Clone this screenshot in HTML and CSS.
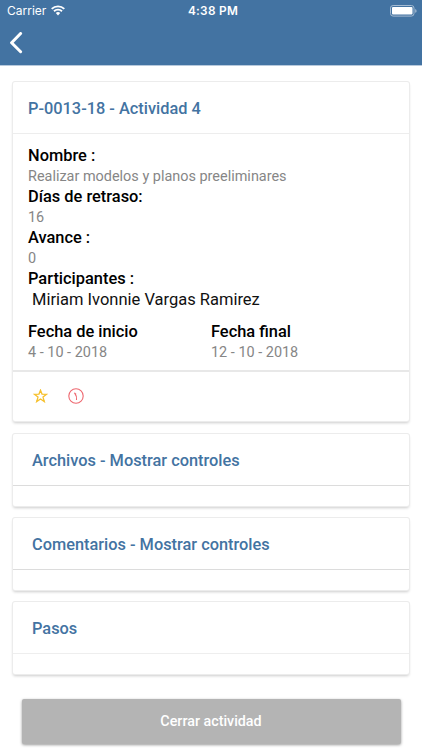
FILE: index.html
```
<!DOCTYPE html>
<html lang="es">
<head>
<meta charset="utf-8">
<title>Actividad</title>
<link rel="stylesheet" href="styles.css">
</head>
<body>
<header class="header">
  <div class="status">
    <div class="carrier"><span>Carrier</span>
      <svg class="wifi" width="14" height="11" viewBox="0 0 14 11" fill="none" stroke="#fff" stroke-width="1.9"><path d="M.7 3.9a9 9 0 0 1 12.6 0M3 6.3a5.7 5.7 0 0 1 8 0"/><path d="M4.8 8.1a3.2 3.2 0 0 1 4.4 0L7 10.4z" fill="#fff" stroke="none"/></svg>
    </div>
    <span class="time">4:38 PM</span>
    <svg class="battery" width="28" height="12" viewBox="0 0 28 12"><rect x=".5" y=".5" width="23.5" height="10.6" rx="2.6" fill="none" stroke="#a5bbd2"/><rect x="2" y="2" width="20.5" height="7.6" rx="1" fill="#fff"/><path d="M25.2 4v3.8q1.4-.6 1.4-1.9t-1.4-1.9z" fill="#a5bbd2"/></svg>
  </div>
  <svg class="back" width="14" height="22" viewBox="0 0 14 22" fill="none" stroke="#fff" stroke-width="3" stroke-linecap="round" stroke-linejoin="round"><path d="M11.6 1.5 2.6 10.7 11.6 19.7"/></svg>
</header>
<main class="content">
  <section class="card activity">
    <h1 class="title">P-0013-18 - Actividad 4</h1>
    <div class="details">
      <div class="label">Nombre :</div>
      <div class="value">Realizar modelos y planos preeliminares</div>
      <div class="label">Días de retraso:</div>
      <div class="value">16</div>
      <div class="label">Avance :</div>
      <div class="value">0</div>
      <div class="label participants">Participantes :</div>
      <div class="person">Miriam Ivonnie Vargas Ramirez</div>
      <div class="dates">
        <div><div class="label">Fecha de inicio</div><div class="value">4 - 10 - 2018</div></div>
        <div><div class="label">Fecha final</div><div class="value">12 - 10 - 2018</div></div>
      </div>
    </div>
    <div class="icons">
      <svg width="15" height="14" viewBox="0 0 14 14" fill="none" stroke="#f6c02c" stroke-width="1.3"><path d="M7 1.2 8.5 5.1l4.6.2-3.6 2.8 1.3 4.5L7 10l-3.8 2.6 1.3-4.5L.9 5.3l4.6-.2z"/></svg>
      <svg width="16" height="16" viewBox="0 0 16 16" fill="none" stroke="#ee6870" stroke-width="1.1"><circle cx="8" cy="8" r="7.2"/><path d="M6.3 4.8Q7 6.2 8.2 5.8M6.7 5.2Q9.2 8.5 8.5 12"/></svg>
    </div>
  </section>
  <section class="card panel"><h2 class="title">Archivos - Mostrar controles</h2></section>
  <section class="card panel"><h2 class="title">Comentarios - Mostrar controles</h2></section>
  <section class="card panel steps"><h2 class="title">Pasos</h2></section>
  <button class="close">Cerrar actividad</button>
</main>
</body>
</html>
```

FILE: styles.css
```
* { box-sizing: border-box; }
body { margin: 0; height: 750px; overflow: hidden; background: #fff; font-family: Roboto, sans-serif; }
svg { display: block; flex: none; }
.header { height: 65px; background: #4373a2; color: #fff; box-shadow: 0 1px #b7c9dc; }
.status { height: 22px; display: grid; grid-template-columns: 1fr auto 1fr; align-items: center; padding: 0 4px 0 7px; font: 12px/22px Inter, sans-serif; }
.carrier { display: flex; gap: 5px; align-items: center; }
.wifi { margin-top: -1px; }
.time { font-weight: 600; font-size: 11.8px; letter-spacing: .3px; padding-left: 1px; }
.battery { justify-self: end; margin-top: -1px; }
.back { margin: 10px 0 0 9px; }
.content { padding: 17px 13px 0; }
.card { background: #fff; border-radius: 2px; margin-bottom: 11px; box-shadow: 0 0 0 1px #ececec, 0 2px 3px rgba(0,0,0,.2); }
.title { margin: 0; color: #4373a2; font-size: 16.35px; font-weight: 500; line-height: 20px; border-bottom: 1px solid #dcdcdc; }
.activity { height: 339px; margin-bottom: 13px; }
.activity .title { height: 52px; padding: 17px 15px 0; border-color: #ededed; }
.details { height: 238px; padding: 12px 15px 0; border-bottom: 2px solid #e8e8e8; }
.label { font-size: 16.4px; font-weight: 500; line-height: 19.4px; height: 21px; color: #000; }
.value { font-size: 14.45px; line-height: 20px; height: 19.8px; color: #868686; }
.participants { line-height: 21px; }
.person { font-size: 16.5px; line-height: 22px; padding-left: 4px; color: #111; }
.dates { display: grid; grid-template-columns: 183px 1fr; padding-top: 10px; }
.dates .label { line-height: 21px; }
.dates .value { line-height: 21.6px; }
.icons { display: flex; gap: 20px; align-items: center; height: 48px; padding-left: 20px; }
.panel { height: 72px; margin-bottom: 12px; }
.panel .title { height: 52px; padding: 17px 19px 0; }
.steps .title { border-color: #eee; }
.close { display: block; width: 379px; height: 45px; margin: 25px 0 0 8.5px; border: 0; border-radius: 2px; background: #b4b4b4; color: #fff; font: 500 14.3px/45px Roboto, sans-serif; padding: 0; box-shadow: 0 1px 3px rgba(0,0,0,.4); }
```
